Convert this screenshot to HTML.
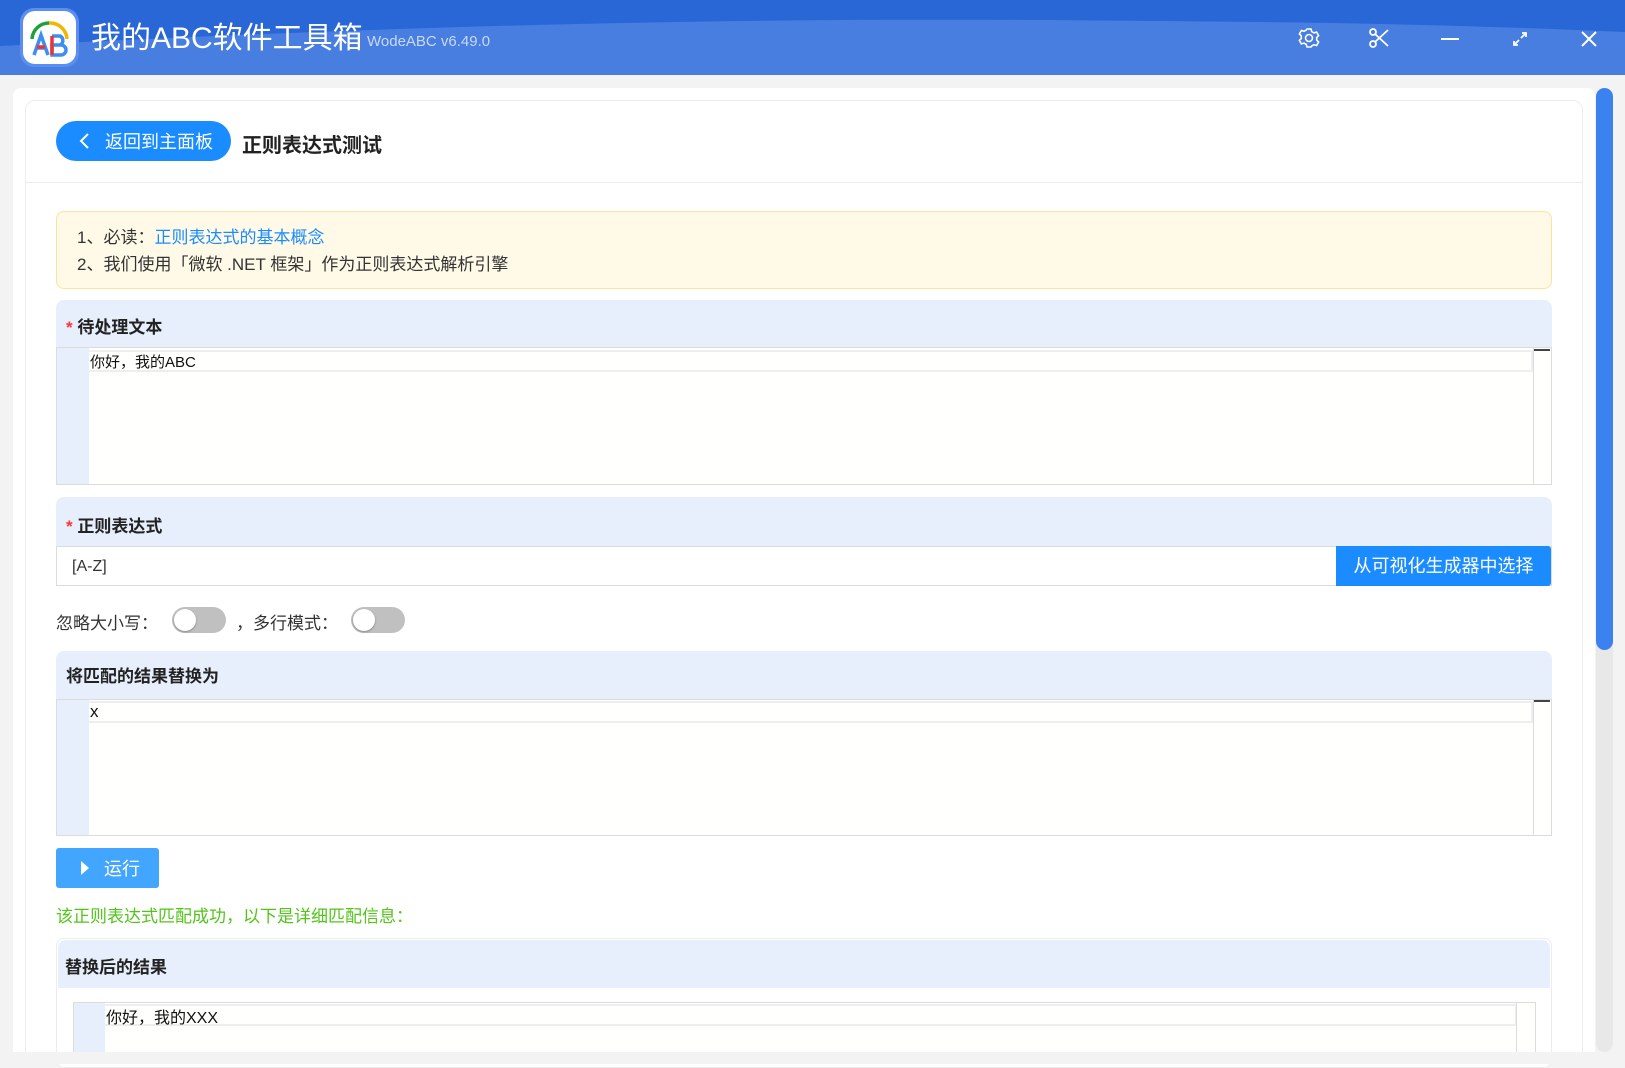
<!DOCTYPE html>
<html><head><meta charset="utf-8"><style>
*{margin:0;padding:0;box-sizing:border-box}
body{width:1625px;height:1064px;background:#f3f3f3;font-family:"Liberation Sans","Noto Sans CJK SC",sans-serif;position:relative;overflow:hidden;color:#333}
.a{position:absolute}
.hdr{left:0;top:0;width:1625px;height:75px;background:#477ee0;overflow:hidden}
.sec{background:#e8effc;border-radius:8px 8px 0 0}
.lbl{font-weight:bold;font-size:17px;color:#222}
.ta{background:#fffffd;border:1px solid #dcdcdc}
.gut{background:#e8effc}
.line{background:#fffffd;border:2px solid #eee;border-left:none}
.tog{width:54px;height:26px;border-radius:13px;background:#c0c0c0}
.tog i{position:absolute;left:2px;top:2px;width:22px;height:22px;border-radius:50%;background:#fff;box-shadow:0 1px 2px rgba(0,0,0,.3)}
</style></head><body>
<div class="a hdr">
<svg class="a" style="left:0;top:0" width="1625" height="75"><path d="M0 0H1625V32C1400 22 1250 22 1050 20C700 18 400 26 0 46Z" fill="#2967d6"/></svg>
<div class="a" style="left:20px;top:8px;width:59px;height:59px;border-radius:14px;background:#5b8ef0"></div>
<div class="a" style="left:23px;top:11px;width:53px;height:53px;border-radius:12px;background:#fff"></div>
<svg class="a" style="left:23px;top:11px" width="53" height="53"><path d="M9 28A17 17 0 0 1 26 12" stroke="#1ea03c" stroke-width="3.5" fill="none"/><path d="M26 12A17 17 0 0 1 44 28" stroke="#f2b600" stroke-width="3.5" fill="none"/><path d="M11 44L18 24L25 44M14 37H22" stroke="#3d8ef0" stroke-width="3.5" fill="none"/><path d="M14 36H22" stroke="#e8333a" stroke-width="3.5"/><path d="M29 25H37A5 5 0 0 1 37 34H29V44H38A5 5 0 0 0 38 34" stroke="#3d8ef0" stroke-width="3.5" fill="none"/><path d="M29 25V44" stroke="#e8333a" stroke-width="3.5"/></svg>
<div class="a" style="left:91px;top:19px;font-size:30px;color:#fff;line-height:40px">我的ABC软件工具箱</div>
<div class="a" style="left:367px;top:33px;font-size:15px;color:#c9d9f7">WodeABC v6.49.0</div>
<svg class="a" style="left:1298px;top:27px" width="22" height="22" fill="none" stroke="#fff" stroke-width="1.6"><circle cx="11" cy="11" r="3.5"/><path d="M9 2h4l.7 2.6 2.3 1.3 2.6-.8 2 3.5-1.9 1.9v2.6l1.9 1.9-2 3.5-2.6-.8-2.3 1.3L13 20H9l-.7-2.6-2.3-1.3-2.6.8-2-3.5 1.9-1.9V8.9L1.4 7l2-3.5 2.6.8 2.3-1.3z"/></svg>
<svg class="a" style="left:1369px;top:28px" width="22" height="20" fill="none" stroke="#fff" stroke-width="1.8"><circle cx="4" cy="4" r="3"/><circle cx="4" cy="16" r="3"/><path d="M6 6L19 18M6 14L19 2"/></svg>
<div class="a" style="left:1441px;top:38px;width:18px;height:2px;background:#fff"></div>
<svg class="a" style="left:1511px;top:30px" width="18" height="18" fill="none" stroke="#fff" stroke-width="1.8"><path d="M3 15L8 10M10 8L15 3M11 3h4v4M3 11v4h4"/></svg>
<svg class="a" style="left:1581px;top:31px" width="16" height="16" stroke="#fff" stroke-width="2"><path d="M1 1L15 15M15 1L1 15"/></svg>
</div>
<div class="a" style="left:13px;top:88px;width:1582px;height:964px;background:#fff;border-radius:8px 8px 0 0"></div>
<div class="a" style="left:1596px;top:88px;width:17px;height:964px;border-radius:9px;background:#e8e8e8"></div>
<div class="a" style="left:1596px;top:88px;width:17px;height:562px;border-radius:9px;background:#3b82f0"></div>
<div class="a" style="left:25px;top:100px;width:1558px;height:960px;border:1px solid #ececec;border-radius:10px"></div>
<div class="a" style="left:26px;top:182px;width:1556px;height:1px;background:#ececec"></div>
<div class="a" style="left:56px;top:121px;width:175px;height:40px;border-radius:20px;background:#1a8cff;color:#fff;font-size:18px;line-height:42px;padding-left:49px">返回到主面板</div>
<svg class="a" style="left:79px;top:133px" width="12" height="16" fill="none" stroke="#fff" stroke-width="2"><path d="M9 1L2 8L9 15"/></svg>
<div class="a" style="left:242px;top:129px;font-size:20px;font-weight:bold;color:#222">正则表达式测试</div>
<div class="a" style="left:56px;top:211px;width:1496px;height:78px;background:#fffae8;border:1px solid #fae39a;border-radius:8px;font-size:17px;line-height:27px;padding:12px 0 0 20px;color:#333">1、必读：<span style="color:#1a8cff">正则表达式的基本概念</span><br>2、我们使用「微软 .NET 框架」作为正则表达式解析引擎</div>

<div class="a sec" style="left:56px;top:300px;width:1496px;height:47px"></div>
<div class="a lbl" style="left:66px;top:313px"><span style="color:#f33">* </span>待处理文本</div>
<div class="a ta" style="left:56px;top:347px;width:1496px;height:138px"></div>
<div class="a gut" style="left:57px;top:348px;width:32px;height:136px"></div>
<div class="a line" style="left:89px;top:350px;width:1444px;height:22px"></div>
<div class="a" style="left:1533px;top:348px;width:1px;height:136px;background:#dcdcdc"></div>
<div class="a" style="left:1534px;top:349px;width:16px;height:2px;background:#444"></div>
<div class="a" style="left:90px;top:351px;font-size:15px;color:#111">你好，我的ABC</div>

<div class="a sec" style="left:56px;top:497px;width:1496px;height:50px"></div>
<div class="a lbl" style="left:66px;top:512px"><span style="color:#f33">* </span>正则表达式</div>
<div class="a" style="left:56px;top:546px;width:1496px;height:40px;border:1px solid #dcdcdc;background:#fff"></div>
<div class="a" style="left:72px;top:558px;font-size:16px;color:#333">[A-Z]</div>
<div class="a" style="left:1336px;top:546px;width:215px;height:40px;background:#1a8cff;border-radius:0 3px 3px 0;color:#fff;font-size:18px;line-height:40px;text-align:center">从可视化生成器中选择</div>

<div class="a" style="left:56px;top:609px;font-size:17px;color:#333">忽略大小写：</div>
<div class="a tog" style="left:172px;top:607px"><i></i></div>
<div class="a" style="left:236px;top:609px;font-size:17px;color:#333">，多行模式：</div>
<div class="a tog" style="left:351px;top:607px"><i></i></div>

<div class="a sec" style="left:56px;top:651px;width:1496px;height:48px"></div>
<div class="a lbl" style="left:66px;top:662px">将匹配的结果替换为</div>
<div class="a ta" style="left:56px;top:699px;width:1496px;height:137px"></div>
<div class="a gut" style="left:57px;top:700px;width:32px;height:135px"></div>
<div class="a line" style="left:89px;top:701px;width:1444px;height:22px"></div>
<div class="a" style="left:1533px;top:700px;width:1px;height:135px;background:#dcdcdc"></div>
<div class="a" style="left:1534px;top:700px;width:16px;height:2px;background:#444"></div>
<div class="a" style="left:90px;top:702px;font-size:17px;color:#111">x</div>

<div class="a" style="left:56px;top:848px;width:103px;height:40px;background:#42a6ff;border-radius:3px;color:#fff;font-size:18px;line-height:42px;padding-left:48px">运行</div>
<svg class="a" style="left:81px;top:861px" width="8" height="14"><path d="M0 0L8 7L0 14Z" fill="#fff"/></svg>
<div class="a" style="left:56px;top:902px;font-size:17px;color:#52c41a">该正则表达式匹配成功，以下是详细匹配信息：</div>

<div class="a" style="left:56px;top:938px;width:1496px;height:130px;border:1px solid #ececec;border-radius:8px;background:#fff"></div>
<div class="a sec" style="left:58px;top:940px;width:1492px;height:48px"></div>
<div class="a lbl" style="left:65px;top:953px">替换后的结果</div>
<div class="a ta" style="left:73px;top:1002px;width:1463px;height:60px"></div>
<div class="a gut" style="left:74px;top:1003px;width:31px;height:58px"></div>
<div class="a line" style="left:105px;top:1004px;width:1412px;height:22px"></div>
<div class="a" style="left:1516px;top:1003px;width:1px;height:58px;background:#dcdcdc"></div>
<div class="a" style="left:106px;top:1004px;font-size:16px;color:#111">你好，我的XXX</div>
<div class="a" style="left:0;top:1052px;width:1625px;height:12px;background:#f3f3f3"></div>
</body></html>
